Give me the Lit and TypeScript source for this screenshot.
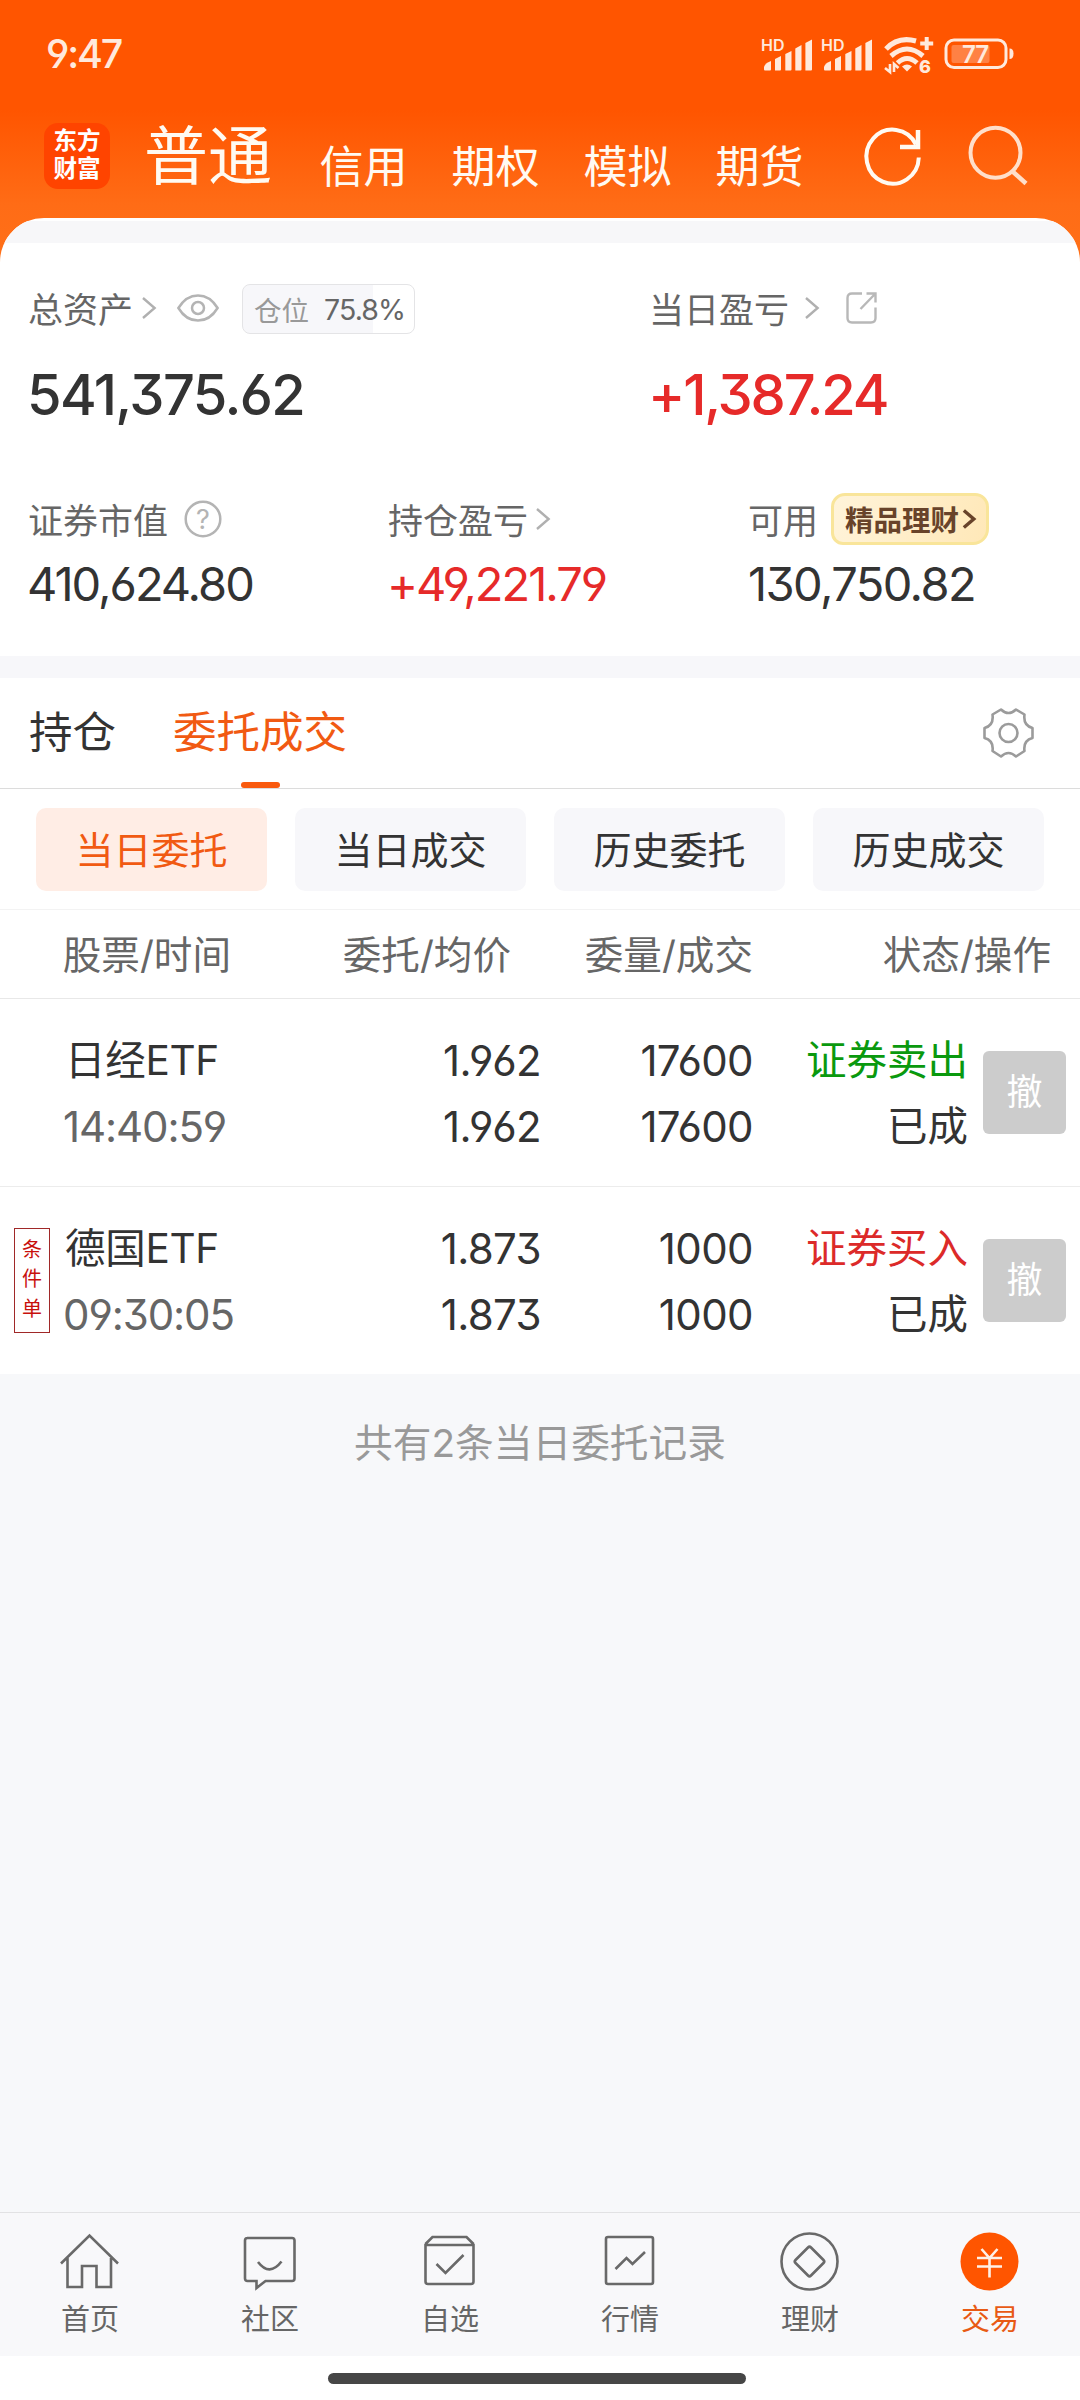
import { LitElement, html, css, svg, nothing, type TemplateResult } from "lit";
import { customElement, property } from "lit/decorators.js";
import { classMap } from "lit/directives/class-map.js";

interface Order {
  name: string;
  time: string;
  price: string;
  average: string;
  amount: string;
  filled: string;
  side: "sell" | "buy";
  action: string;
  state: string;
  tag?: string;
}

const ORDERS: Order[] = [
  { name: "日经ETF", time: "14:40:59", price: "1.962", average: "1.962", amount: "17600", filled: "17600", side: "sell", action: "证券卖出", state: "已成" },
  { name: "德国ETF", time: "09:30:05", price: "1.873", average: "1.873", amount: "1000", filled: "1000", side: "buy", action: "证券买入", state: "已成", tag: "条件单" },
];

const base = css`
  * { box-sizing: border-box; }
  svg { display: block; flex: none; overflow: visible; }
`;

const chevron = (color = "#b0b0b0", w = 14, h = 22, s = 2.4) => svg`
  <svg width=${w} height=${h} viewBox="0 0 14 22" fill="none" stroke=${color} stroke-width=${s}>
    <path d="M1 1 L12.6 11 L1 21" />
  </svg>`;

@customElement("status-bar")
class StatusBar extends LitElement {
  static styles = [base, css`
    :host { display: flex; height: 108px; padding: 0 66px 0 46px; justify-content: space-between; align-items: center; color: #ffe9dc; }
    .time { font-size: 39.5px; font-weight: 500; line-height: 48px; letter-spacing: -2.2px; }
    .signals { display: flex; align-items: center; gap: 10px; margin-top: -1px; }
    .hd { font: 600 16px "Inter", sans-serif; }
    .six { font: 800 18px "Inter", sans-serif; }
    .pct { font: 600 24px "Inter", sans-serif; letter-spacing: -1px; }
  `];
  private signal() {
    return svg`<svg width="50" height="36" viewBox="0 0 50 36" fill="#ffe9dc">
      <text class="hd" x="-1" y="15">HD</text>
      <path d="M2 33.500 V31 Q3 27 9 25 V33.500 Q9 34.500 8 34.500 H3 Q2 34.500 2 33.500Z"/>
      <path d="M13 34.500 V23 L19 20 V33.500 Q19 34.500 18 34.500Z"/>
      <path d="M23.300 34.500 V18 L29.500 15 V33.500 Q29.500 34.500 28.500 34.500Z"/>
      <path d="M33.300 34.500 V12.500 L39.500 9 V33.500 Q39.500 34.500 38.500 34.500Z"/>
      <path d="M43.400 34.500 V7 L50 3.500 V33.500 Q50 34.500 49 34.500Z"/>
    </svg>`;
  }
  render() {
    return html`
      <div class="time">9:47</div>
      <div class="signals">
        ${this.signal()}${this.signal()}
        <svg width="52" height="40" viewBox="0 0 52 40" fill="none" stroke="#ffe9dc">
          <path d="M4 15 Q16 2 34 7" stroke-width="5"/>
          <path d="M9 22 Q25 8 41 22" stroke-width="5"/>
          <path d="M15.500 29 Q25 20 35 29" stroke-width="5"/>
          <path d="M20 32.500 Q25 28.500 30 32.500 L25 37.500Z" fill="#ffe9dc" stroke="none"/>
          <path d="M44.700 3 V16 M38.200 9.500 H51.200" stroke-width="4"/>
          <path d="M8 30 V38 L3 34 M12 38 V30 L16.500 34" stroke-width="2.600"/>
          <text class="six" x="37" y="39" fill="#ffe9dc" stroke="none">6</text>
        </svg>
        <svg width="70" height="32" viewBox="0 0 70 32">
          <rect x="2" y="2" width="60" height="27.500" rx="8" fill="none" stroke="#ffe9dc" stroke-width="3"/>
          <rect x="7.500" y="7" width="38" height="18" rx="2" fill="#ff8144"/>
          <path d="M65.500 10.500 Q69.500 10.500 69.500 15.500 Q69.500 21 65.500 21Z" fill="#ffe9dc"/>
          <text class="pct" x="18" y="24.500" fill="#ffe9dc">77</text>
        </svg>
      </div>`;
  }
}

@customElement("app-header")
class AppHeader extends LitElement {
  static styles = [base, css`
    :host { display: flex; height: 110px; padding-left: 44px; align-items: flex-start; color: #fffaf2; }
    .logo { margin-top: 15px; width: 66px; height: 66px; border-radius: 14px; background: #ff4400; color: #fff; font: 700 23.6px/28px "Liberation Sans", "Noto Sans CJK SC", sans-serif; text-align: center; padding-top: 4px; }
    .main { margin: 7px 0 0 34px; font-size: 64px; line-height: 82px; }
    .tabs { display: flex; gap: 44px; margin: 32px 0 0 47.5px; font-size: 44px; line-height: 54px; }
    .refresh { margin: 19px 0 0 60px; }
    .search { margin: 17px 0 0 46px; }
  `];
  render() {
    return html`
      <div class="logo"><div>东方</div><div>财富</div></div>
      <div class="main">普通</div>
      <div class="tabs">${["信用", "期权", "模拟", "期货"].map((t) => html`<span>${t}</span>`)}</div>
      <svg class="refresh" width="58" height="58" viewBox="0 0 58 58" fill="none" stroke="#fffaf2" stroke-width="4">
        <path d="M54.800 30.500 A26.200 27 0 1 1 52 17.500"/>
        <path d="M54 3 V20 H36" stroke-width="4.500"/>
      </svg>
      <svg class="search" width="60" height="60" viewBox="0 0 60 60" fill="none" stroke="#ffdfca" stroke-width="4">
        <circle cx="27.500" cy="27.700" r="25"/>
        <path d="M44 46 L58 58.500" stroke-width="4.500"/>
      </svg>`;
  }
}

@customElement("asset-card")
class AssetCard extends LitElement {
  static styles = [base, css`
    :host { display: block; height: 438px; background: #fff; border-radius: 44px 44px 0 0; overflow: hidden; padding-top: 3px; color: #333; }
    .strip { height: 22px; background: #f7f7f9; }
    .grid { display: grid; padding-left: 28px; }
    .top { grid-template-columns: 621px 1fr; margin-top: 40px; }
    .bottom { grid-template-columns: 360px 360px 1fr; margin-top: 70px; }
    .label { display: flex; align-items: center; height: 50px; font-size: 35px; color: #666; white-space: nowrap; }
    .label b { font-weight: 400; margin-top: -2px; }
    .big { margin-top: 33px; font-size: 56px; font-weight: 500; line-height: 58px; letter-spacing: -1.6px; margin-left: -1px; }
    .mid { margin-top: 12px; font-size: 47px; line-height: 56px; letter-spacing: -2px; margin-left: -1px; }
    .big.up { letter-spacing: -2.2px; }
    .mid.cash { letter-spacing: -1.6px; margin-left: 0; }
    .up { color: #e62a29; }
    .c1 { margin-left: 9px; }
    .eye { margin-left: 21px; }
    .c2 { margin-left: 16px; }
    .ext { margin-left: 27px; }
    .q { margin-left: 16px; }
    .qm { font: 400 27px "Inter", sans-serif; }
    .c3 { margin-left: 8px; }
    .ratio { margin-left: 23px; width: 173px; height: 50px; margin-top: 2px; border: 1px solid #e4e4e6; border-radius: 8px; padding-left: 11px; display: flex; align-items: center; gap: 15px; font-size: 27.5px; color: #999; }
    .pct { font-size: 28.5px; letter-spacing: -0.9px; color: #666; }
    .badge { margin-left: 13px; width: 158px; height: 52px; border: 3px solid #f9e59a; border-radius: 14px 14px 16px 12px; background: linear-gradient(110deg, #fff4da, #ffe8b8); color: #68432a; font-size: 28.5px; font-weight: 700; display: flex; align-items: center; padding-left: 11px; gap: 4px; }
    .badge span { margin-top: -2px; }
  `];
  @property({ type: Number }) ratio = 75.8;
  render() {
    return html`
      <div class="strip"></div>
      <div class="grid top">
        <div>
          <div class="label"><b>总资产</b><span class="c1">${chevron()}</span>
            <svg class="eye" width="42" height="28" viewBox="0 0 42 28" fill="none" stroke="#b4b4b4" stroke-width="2.500">
              <path d="M1.400 14 Q9 1.400 21 1.400 Q33 1.400 40.600 14 Q33 26.600 21 26.600 Q9 26.600 1.400 14Z"/><circle cx="21" cy="14" r="6"/>
            </svg>
            <div class="ratio" style="background:linear-gradient(90deg,#f7f7fa ${this.ratio}%,#fff ${this.ratio}%)">仓位<span class="pct">${this.ratio}%</span></div>
          </div>
          <div class="big">541,375.62</div>
        </div>
        <div>
          <div class="label"><b>当日盈亏</b><span class="c2">${chevron()}</span>
            <svg class="ext" width="31" height="32" viewBox="0 0 31 32" fill="none" stroke="#b8b8b8" stroke-width="2.400">
              <path d="M16 1.500 H6 Q1.500 1.500 1.500 6 V26 Q1.500 30.500 6 30.500 H25 Q29.500 30.500 29.500 26 V15.500 M20.500 1.500 H29.500 V10.500 M29 2 L14.500 17"/>
            </svg>
          </div>
          <div class="big up">+1,387.24</div>
        </div>
      </div>
      <div class="grid bottom">
        <div>
          <div class="label"><b>证券市值</b>
            <svg class="q" width="38" height="38" viewBox="0 0 38 38" fill="none" stroke="#b4b4b4" stroke-width="2.500">
              <circle cx="19" cy="19" r="17.300"/><text class="qm" x="19" y="28.500" text-anchor="middle" fill="#b4b4b4" stroke="none">?</text>
            </svg>
          </div>
          <div class="mid">410,624.80</div>
        </div>
        <div>
          <div class="label"><b>持仓盈亏</b><span class="c3">${chevron()}</span></div>
          <div class="mid up">+49,221.79</div>
        </div>
        <div>
          <div class="label"><b>可用</b><div class="badge"><span>精品理财</span>${chevron("#68432a", 12, 20, 4)}</div></div>
          <div class="mid cash">130,750.82</div>
        </div>
      </div>`;
  }
}

@customElement("order-panel")
class OrderPanel extends LitElement {
  static styles = [base, css`
    :host { display: block; background: #fff; color: #333; }
    .tabs { display: flex; height: 111px; padding: 0 46px 0 29px; border-bottom: 1px solid #dcdcdc; font-size: 43.5px; }
    .tab { display: flex; flex-direction: column; align-items: center; justify-content: space-between; line-height: 54px; padding-top: 27px; margin-right: 57px; }
    .tab.on { color: #f15a12; }
    .mark { width: 39px; height: 6px; border-radius: 3px; background: #f95a0e; }
    .gear { margin: 30px 0 0 auto; }
    .filters { display: grid; grid-template-columns: repeat(4, 1fr); gap: 28px; padding: 19px 36px 18px; border-bottom: 1px solid #f3f3f3; }
    .filter { height: 83px; border-radius: 10px; background: #f7f7fa; display: flex; align-items: center; justify-content: center; font-size: 38px; padding-bottom: 4px; }
    .filter.on { background: #ffede5; color: #f15a12; }
    .head, .row { display: grid; }
    .head { grid-template-columns: 231px 280px 242px 298px; height: 89px; align-items: center; padding-bottom: 5px; border-bottom: 1px solid #e8e8e8; font-size: 38.6px; color: #666; text-align: right; }
    .row { grid-template-columns: 51px 224px 266px 212px 215px 1fr; height: 188px; align-items: center; border-bottom: 1px solid #ececec; line-height: 66px; font-size: 40.5px; text-align: right; }
    .row:last-of-type { border-bottom: 0; height: 187px; }
    .stock { text-align: left; padding-left: 14px; }
    .name { letter-spacing: -0.3px; }
    .time { color: #666; font-size: 42px; letter-spacing: -1.1px; margin-left: -2px; }
    .num { font-size: 42px; letter-spacing: -0.6px; }
    .lines { margin-top: 7px; height: 137px; white-space: nowrap; }
    .sell { color: #0a990e; }
    .buy { color: #dc2a29; }
    .tag { margin-left: 14px; width: 36px; height: 105px; border: 1px solid #a02828; color: #c8100c; font-size: 20px; line-height: 29.3px; text-align: center; padding: 7px 7px 0; word-break: break-all; }
    .cancel { margin-left: 15px; width: 83px; height: 83px; border-radius: 6px; background: #ccc; color: #fff; font-size: 36px; line-height: 83px; text-align: center; }
  `];
  render() {
    return html`
      <div class="tabs">
        <div class="tab">持仓</div>
        <div class="tab on">委托成交<span class="mark"></span></div>
        <svg class="gear" width="51" height="50" viewBox="0 0 51 50" fill="none" stroke="#9b9b9b" stroke-width="2.600" stroke-linejoin="round">
          <path d="M18 1.500 Q25.500 8.500 33 1.500 L41.500 6.500 Q40 17.500 49.500 20 V30 Q40 32.500 41.500 43 L33 48.500 Q25.500 41.500 18 48.500 L9.500 43 Q11 32.500 1.500 30 V20 Q11 17.500 9.500 6.500Z"/>
          <circle cx="25.500" cy="25" r="9"/>
        </svg>
      </div>
      <div class="filters">
        ${["当日委托", "当日成交", "历史委托", "历史成交"].map((t, i) => html`<div class=${classMap({ filter: true, on: i === 0 })}>${t}</div>`)}
      </div>
      <div class="head">${["股票/时间", "委托/均价", "委量/成交", "状态/操作"].map((t) => html`<span>${t}</span>`)}</div>
      ${ORDERS.map((o) => html`
        <div class="row">
          <div>${o.tag ? html`<div class="tag">${o.tag}</div>` : nothing}</div>
          <div class="lines stock"><div class="name">${o.name}</div><div class="time">${o.time}</div></div>
          <div class="lines num"><div>${o.price}</div><div>${o.average}</div></div>
          <div class="lines num"><div>${o.amount}</div><div>${o.filled}</div></div>
          <div class="lines"><div class=${o.side}>${o.action}</div><div>${o.state}</div></div>
          <div class="cancel">撤</div>
        </div>`)}`;
  }
}

const NAV: { label: string; icon: TemplateResult<2>; on?: boolean }[] = [
  { label: "首页", icon: svg`<path d="M1 31.500 L29.500 3.500 L58 31.500 M7.500 26 V55 H22 V34 H36.500 V55 H51 V26"/>` },
  { label: "社区", icon: svg`<path d="M7 6 H52 Q54.500 6 54.500 8.500 V46.500 Q54.500 49 52 49 H25.500 L16.500 56 V49 H7.500 Q5 49 5 46.500 V8.500 Q5 6 7.500 6Z M18 30 Q29.500 45 41.500 29.500"/>` },
  { label: "自选", icon: svg`<path d="M5.500 13 H53.500 V49.500 Q53.500 52 51 52 H8 Q5.500 52 5.500 49.500Z M5.500 12 L12.500 5 H46.500 L53.500 12 M16.500 32 L25.500 41 L43.500 23"/>` },
  { label: "行情", icon: svg`<rect x="6" y="5" width="47" height="47" rx="2"/><path d="M15.500 37 L26.500 26 L32.500 32 L45 20"/>` },
  { label: "理财", icon: svg`<circle cx="29.500" cy="29.500" r="28"/><path d="M28 15.500 Q29.500 14 31 15.500 L43.500 28 Q45 29.500 43.500 31 L31 43.500 Q29.500 45 28 43.500 L15.500 31 Q14 29.500 15.500 28Z"/>` },
  { label: "交易", on: true, icon: svg`<circle cx="29.500" cy="29.500" r="29" fill="#ff5500" stroke="none"/><path stroke="#fff0e6" d="M21.500 17 L29.500 26 L37.500 17 M17 26 H42 M17 34.500 H42 M29.500 26 V45.500"/>` },
];

@customElement("bottom-nav")
class BottomNav extends LitElement {
  static styles = [base, css`
    :host { display: block; background: #fff; height: 188px; }
    .items { display: grid; grid-template-columns: repeat(6, 1fr); height: 144px; background: #f8f8fa; border-top: 1px solid #e2e2e4; }
    .item { display: flex; flex-direction: column; align-items: center; padding-top: 19px; color: #666; font-size: 29px; line-height: 36px; gap: 10px; }
    .on { color: #e85a14; }
    .bar { width: 418px; height: 11px; border-radius: 6px; background: #464646; margin: 17px auto 0 328px; }
  `];
  render() {
    return html`
      <div class="items">
        ${NAV.map((n) => html`<div class=${classMap({ item: true, on: !!n.on })}>
          <svg width="60" height="60" viewBox="0 0 60 60" fill="none" stroke="#696969" stroke-width="2.600">${n.icon}</svg>
          <span>${n.label}</span></div>`)}
      </div>
      <div class="bar"></div>`;
  }
}

@customElement("app-root")
class AppRoot extends LitElement {
  static styles = [base, css`
    :host { display: flex; flex-direction: column; width: 1080px; height: 2400px; overflow: hidden; background: #f7f8fa; font-family: "Inter", "Noto Sans CJK SC", sans-serif; font-feature-settings: "cv03", "cv04", "cv09"; }
    .hero { background: linear-gradient(180deg, #ff5500 0, #ff5500 110px, #ff6c16 205px, #ff7018 262px); flex: none; }
    .gap { height: 22px; flex: none; background: #f7f7fa; }
    .note { padding-top: 46px; text-align: center; font-size: 38.7px; line-height: 46px; color: #999; flex: 1; }
  `];
  render() {
    return html`
      <div class="hero">
        <status-bar></status-bar>
        <app-header></app-header>
        <asset-card></asset-card>
      </div>
      <div class="gap"></div>
      <order-panel></order-panel>
      <div class="note">共有${ORDERS.length}条当日委托记录</div>
      <bottom-nav></bottom-nav>`;
  }
}
